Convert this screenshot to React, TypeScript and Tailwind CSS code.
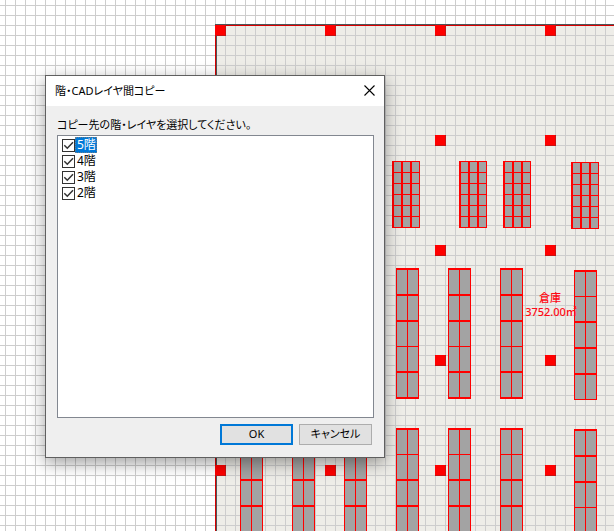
import { useState } from 'react';

interface Floor {
  id: string;
  label: string;
  checked: boolean;
}

const INITIAL_FLOORS: Floor[] = [
  { id: 'f5', label: '5階', checked: true },
  { id: 'f4', label: '4階', checked: true },
  { id: 'f3', label: '3階', checked: true },
  { id: 'f2', label: '2階', checked: true },
];

const PILLARS = [25, 135, 245, 355, 465].flatMap((y) => [215, 325, 435, 545].map((x) => ({ x, y })));

const SMALL_RACKS = [
  { x: 392, y: 161 },
  { x: 459, y: 161 },
  { x: 503, y: 161 },
  { x: 571, y: 162 },
];

// shelf lines as [offset from top, thickness]
const MIDDLE_SHELVES = [[0, 2], [26, 2], [52, 2], [78, 1], [103, 2], [129, 2]];
const MIDDLE_SHELVES_EAST = [[0, 2], [26, 1], [51, 2], [77, 2], [103, 2], [129, 1]];
const LOWER_SHELVES = [[0, 2], [26, 1], [51, 2], [77, 2], [103, 2]];
const LOWER_SHELVES_EAST = [[0, 2], [26, 2], [52, 2], [78, 1], [103, 2]];

const LARGE_RACKS = [
  ...[396, 448, 500].map((x) => ({ x, y: 268, h: 131, shelves: MIDDLE_SHELVES })),
  { x: 574, y: 270, h: 130, shelves: MIDDLE_SHELVES_EAST },
  ...[240, 292, 344, 396, 448, 500].map((x) => ({ x, y: 428, h: 131, shelves: LOWER_SHELVES })),
  { x: 574, y: 429, h: 131, shelves: LOWER_SHELVES_EAST },
];

function SmallRack({ x, y }: { x: number; y: number }) {
  return (
    <g fill="#ff0000">
      <rect x={x} y={y} width="28" height="67" fill="#a3a3a3" />
      {[0, 9, 18].map((dx) => (
        <rect key={dx} x={x + dx} y={y} width="2" height="67" />
      ))}
      <rect x={x + 27} y={y} width="1" height="67" />
      {[0, 11, 22, 33, 44, 55, 66].map((dy) => (
        <rect key={dy} x={x} y={y + dy} width="28" height="1" />
      ))}
    </g>
  );
}

function LargeRack({ x, y, h, shelves }: { x: number; y: number; h: number; shelves: number[][] }) {
  return (
    <g fill="#ff0000">
      <rect x={x} y={y} width="23" height={h} fill="#a3a3a3" />
      {[0, 11, 22].map((dx) => (
        <rect key={dx} x={x + dx} y={y} width="1" height={h} />
      ))}
      {shelves.map(([dy, t]) => (
        <rect key={dy} x={x} y={y + dy} width="23" height={t} />
      ))}
    </g>
  );
}

function FloorPlan() {
  return (
    <svg className="absolute inset-0 h-full w-full" shapeRendering="crispEdges" role="img" aria-label="倉庫 平面図">
      <defs>
        <pattern id="grid" width="10" height="10" patternUnits="userSpaceOnUse">
          <path d="M5 0h1v10h-1zM0 5h10v1H0z" fill="#cdcdcd" />
        </pattern>
      </defs>
      <rect width="100%" height="100%" fill="#ffffff" />
      <rect x="216" y="25" width="100%" height="100%" fill="#eeede8" />
      <rect width="100%" height="100%" fill="url(#grid)" />
      <rect x="215" y="24" width="100%" height="1" fill="#4f5457" />
      <rect x="216" y="25" width="1" height="100%" fill="#4f5457" />
      <rect x="215" y="25" width="100%" height="1" fill="#d90000" />
      <rect x="215" y="25" width="1" height="100%" fill="#d90000" />
      {PILLARS.map(({ x, y }) => (
        <g key={`${x}-${y}`}>
          <rect x={x} y={y} width="11" height="11" fill="#c41414" />
          <rect x={x} y={y} width="10" height="10" fill="#ff0000" />
        </g>
      ))}
      {SMALL_RACKS.map((r) => (
        <SmallRack key={r.x} {...r} />
      ))}
      {LARGE_RACKS.map((r) => (
        <LargeRack key={`${r.x}-${r.y}`} {...r} />
      ))}
      <g
        className="font-['Noto_Sans','Noto_Sans_CJK_JP',sans-serif] text-[11px] font-medium"
        fill="#ff0a14"
        textAnchor="middle"
      >
        <text x="550" y="302">倉庫</text>
        <text x="551" y="316">3752.00㎡</text>
      </g>
    </svg>
  );
}

function FloorRow({
  floor,
  selected,
  onToggle,
}: {
  floor: Floor;
  selected: boolean;
  onToggle: () => void;
}) {
  return (
    <li className="flex h-4">
      <label className="flex items-center">
        <span className="relative flex">
          <input
            type="checkbox"
            checked={floor.checked}
            onChange={onToggle}
            className="peer size-[13px] appearance-none border border-[#333333] bg-white"
          />
          <svg
            viewBox="0 0 13 13"
            className="pointer-events-none absolute inset-0 hidden size-[13px] peer-checked:block"
            fill="none"
            stroke="#333333"
            strokeWidth="1.5"
            aria-hidden
          >
            <path d="M2.3 6.3l3 3 5.7-6" />
          </svg>
        </span>
        <span
          className={`h-4 pr-px pl-0.5 text-xs leading-4 ${
            selected ? 'bg-[#0078d7] text-white outline-1 -outline-offset-1 outline-dotted outline-[#ff8728]/40' : 'text-black'
          }`}
        >
          {floor.label}
        </span>
      </label>
    </li>
  );
}

function CopyDialog() {
  const [floors, setFloors] = useState(INITIAL_FLOORS);
  const [selected, setSelected] = useState('f5');

  const toggle = (id: string) => {
    setSelected(id);
    setFloors((prev) => prev.map((f) => (f.id === id ? { ...f, checked: !f.checked } : f)));
  };

  return (
    <section
      role="dialog"
      aria-labelledby="copy-title"
      className="absolute top-[75px] left-[45px] w-[340px] border border-[#5f5f5f] bg-[#efefef] font-['Noto_Sans','Noto_Sans_CJK_JP',sans-serif] text-[11px] text-black shadow-[0_5px_16px_rgba(0,0,0,0.38)] [font-feature-settings:'palt']"
    >
      <header className="flex h-[30px] items-center justify-between bg-white pr-[7px] pl-[9px]">
        <h1 id="copy-title">階・CADレイヤ間コピー</h1>
        <button type="button" aria-label="閉じる" className="flex size-4 items-start justify-center pt-0.5">
          <svg viewBox="0 0 11 11" className="size-[11px]" stroke="#000000" strokeWidth="1.1" aria-hidden>
            <path d="M0.5 0.5l10 10M10.5 0.5l-10 10" />
          </svg>
        </button>
      </header>
      <div className="pt-[11px] pr-2.5 pb-3 pl-[11px]">
        <p id="copy-help" className="pb-0.5 leading-4">
          コピー先の階・レイヤを選択してください。
        </p>
        <ul
          aria-labelledby="copy-help"
          className="h-[283px] border border-[#828790] bg-white px-1 py-px"
        >
          {floors.map((f) => (
            <FloorRow key={f.id} floor={f} selected={f.id === selected} onToggle={() => toggle(f.id)} />
          ))}
        </ul>
        <div className="flex justify-end gap-1.5 pt-1.5 pr-0.5">
          <button
            type="button"
            className="flex h-[21px] w-[73px] items-center justify-center border-2 border-[#0078d7] bg-[#e1e1e1]"
          >
            OK
          </button>
          <button
            type="button"
            className="flex h-[21px] w-[73px] items-center justify-center border border-[#adadad] bg-[#e1e1e1]"
          >
            キャンセル
          </button>
        </div>
      </div>
    </section>
  );
}

export default function App() {
  return (
    <main className="relative min-h-screen overflow-hidden">
      <FloorPlan />
      <CopyDialog />
    </main>
  );
}
